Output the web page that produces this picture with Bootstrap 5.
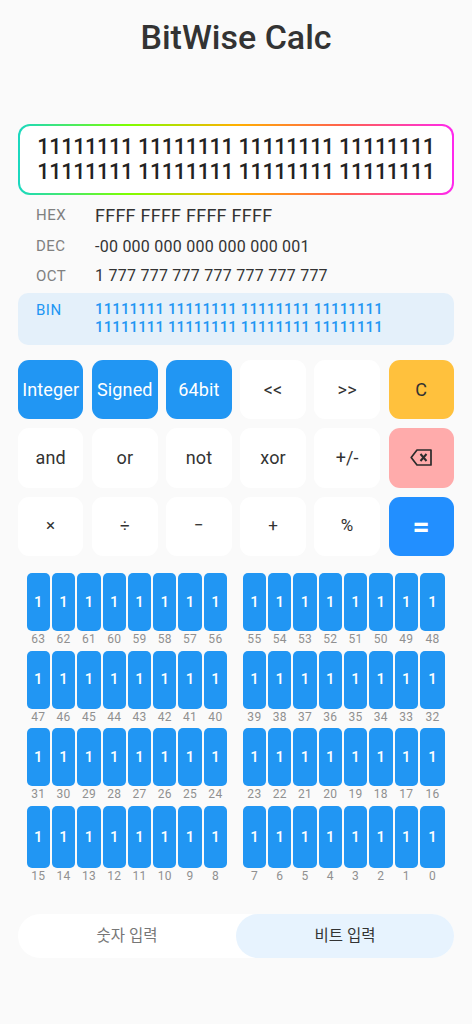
<!DOCTYPE html>
<html lang="ko">
<head>
<meta charset="utf-8">
<meta name="viewport" content="width=device-width, initial-scale=1">
<link href="https://cdn.jsdelivr.net/npm/bootstrap@5.3.0/dist/css/bootstrap.min.css" rel="stylesheet">
<style>
html,body{height:1024px;overflow:hidden}
body{background:#fafafa;font-family:Roboto,"Noto Sans CJK KR",sans-serif;color:#333}
.app-shell{width:472px;height:1024px;padding:0 18px}
.app-title{height:124px;padding-top:15px;margin:0;font-size:34px;line-height:44px;font-weight:500;text-align:center;color:#333}
.main-display{height:71px;border:2px solid transparent;border-radius:12px;background:linear-gradient(#fff,#fff) padding-box,linear-gradient(90deg,#1ad8c0,#7dff00,#ffb000,#ff5f50,#ff28ee) border-box;text-align:center;font-size:21.5px;font-weight:500;line-height:25px;color:#222;padding-top:8px;white-space:nowrap;letter-spacing:-.28px}
.base-row{padding-left:18px;display:flex;align-items:center;letter-spacing:.25px}
.base-name{width:59px;font-size:15px;color:#808080;flex:none;letter-spacing:.5px}
.base-hex{height:40px;font-size:18px}
.base-dec{height:23px;font-size:16px}
.base-oct{height:35px;padding-top:1px;font-size:16px}
.base-bin{height:52px;background:#e4f0fa;border-radius:10px;align-items:flex-start;padding-top:8px;color:#2196f3}
.base-bin .base-name{color:#2196f3;line-height:18px}
.bin-val{font-size:15px;font-weight:500;line-height:17.5px;letter-spacing:.11px}
.key-grid{display:grid;grid-template-columns:repeat(6,1fr);grid-auto-rows:59.3px;gap:9px 8.7px;margin-top:15px}
.calc-key{border-radius:11px;background:#fff;border:0;padding:0;color:#333;font-size:18px;display:flex;align-items:center;justify-content:center;letter-spacing:.15px;white-space:nowrap}
.calc-key.shift{font-size:18px;font-weight:400}
.calc-key.op{font-size:17px;font-weight:400}
.key-on{background:#2196f3;color:#fff}
.key-c{background:#ffc13d}
.key-del{background:#ffabab}
.key-eq{background:#228fff;color:#fff;font-size:30px;font-weight:700}
.bit-rows{margin-top:17px;padding-left:8.7px}
.bit-row{display:flex;gap:15.7px;height:77.7px}
.bit-group{display:flex;gap:2px}
.bit-col{width:23.3px;display:flex;flex-direction:column;align-items:center}
.bit-col.wide{width:25.3px}
.bit-cell{width:100%;height:58px;background:#2196f3;color:#fff;border-radius:5px;font-size:15px;font-weight:500;display:flex;align-items:center;justify-content:center}
.bit-row.tall .bit-cell{height:63px}
.bit-num{font-size:12px;line-height:16px;color:#909090;letter-spacing:.3px}
.mode-toggle{display:flex;height:44px;background:#fff;border-radius:22px;margin-top:30px;font-size:15.5px;line-height:46px}
.mode-part{flex:1;display:flex;align-items:center;justify-content:center;border-radius:22px;color:#777}
.mode-part.active{background:#e7f3fe;color:#333}
</style>
</head>
<body>
<div class="app-shell">
<h1 class="app-title">BitWise Calc</h1>
<div class="main-display">11111111 11111111 11111111 11111111<br>11111111 11111111 11111111 11111111</div>
<div class="base-row base-hex"><span class="base-name">HEX</span><span>FFFF FFFF FFFF FFFF</span></div>
<div class="base-row base-dec"><span class="base-name">DEC</span><span>-00 000 000 000 000 000 001</span></div>
<div class="base-row base-oct"><span class="base-name">OCT</span><span>1 777 777 777 777 777 777 777</span></div>
<div class="base-row base-bin"><span class="base-name">BIN</span><span class="bin-val">11111111 11111111 11111111 11111111<br>11111111 11111111 11111111 11111111</span></div>
<div class="key-grid">
<button class="calc-key key-on">Integer</button><button class="calc-key key-on">Signed</button><button class="calc-key key-on">64bit</button><button class="calc-key shift">&lt;&lt;</button><button class="calc-key shift">&gt;&gt;</button><button class="calc-key key-c">C</button>
<button class="calc-key">and</button><button class="calc-key">or</button><button class="calc-key">not</button><button class="calc-key">xor</button><button class="calc-key">+/-</button>
<button class="calc-key key-del" aria-label="delete"><svg width="22" height="17" viewBox="0 0 22 17" fill="none" stroke="#2b2b2b" stroke-width="1.7"><path d="M7 1H21V16H7L1.2 8.5Z" stroke-linejoin="round"/><path d="M10.5 5L16.5 12M16.5 5L10.5 12" stroke-width="2"/></svg></button>
<button class="calc-key op">×</button><button class="calc-key op">÷</button><button class="calc-key op">−</button><button class="calc-key op">+</button><button class="calc-key op">%</button><button class="calc-key key-eq">=</button>
</div>
<div class="bit-rows" id="bits"></div>
<div class="mode-toggle"><div class="mode-part">숫자 입력</div><div class="mode-part active">비트 입력</div></div>
</div>
<script>
var h='',n=63;
for(var r=0;r<4;r++){
 h+='<div class="bit-row'+(r==3?' tall':'')+'">';
 for(var g=0;g<2;g++){
  h+='<div class="bit-group">';
  for(var i=0;i<8;i++){
   h+='<div class="bit-col'+(n%16==0?' wide':'')+'"><div class="bit-cell">1</div><div class="bit-num">'+n+'</div></div>';n--;
  }
  h+='</div>';
 }
 h+='</div>';
}
document.getElementById('bits').innerHTML=h;
</script>
<script src="https://cdn.jsdelivr.net/npm/bootstrap@5.3.0/dist/js/bootstrap.bundle.min.js"></script>
</body>
</html>
